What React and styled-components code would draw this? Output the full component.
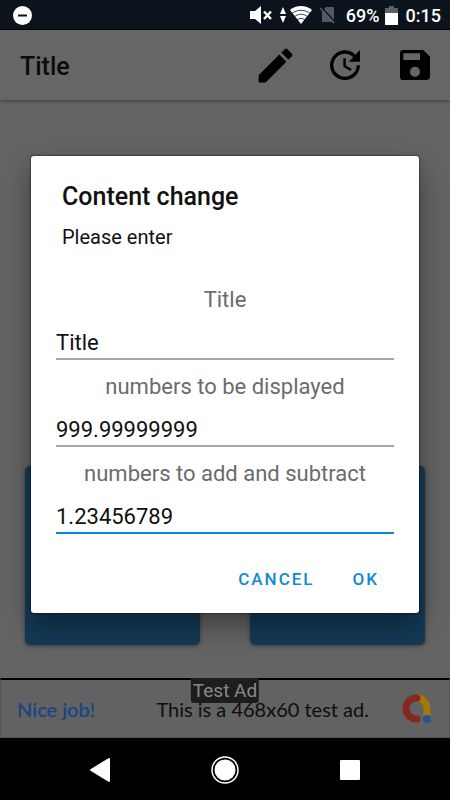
import React, { useState } from 'react';
import styled, { createGlobalStyle } from 'styled-components';
import { MdEdit, MdUpdate, MdSave } from 'react-icons/md';

const GlobalStyle = createGlobalStyle`
  * {
    box-sizing: border-box;
  }

  body {
    margin: 0;
    background: #000;
    font-family: Roboto, "Noto Sans", sans-serif;
  }

  button {
    border: 0;
    padding: 0;
    background: none;
    font-family: inherit;
    cursor: pointer;
  }
`;

const Screen = styled.div`
  display: flex;
  flex-direction: column;
  min-height: 100vh;
`;

const StatusBar = styled.div`
  display: flex;
  align-items: center;
  justify-content: space-between;
  height: 30px;
  padding: 1px 9px 0 13px;
  background: #0b131c;
  border-bottom: 1px solid #000;
  color: #fff;
  font-size: 18px;
  font-weight: 500;

  svg {
    display: block;
  }
`;

const StatusGroup = styled.div`
  display: flex;
  align-items: center;
  gap: ${props => props.$gap || 0}px;
`;

const AppArea = styled.div`
  position: relative;
  flex: 1;
  display: flex;
  flex-direction: column;
  background: #646464;
`;

const AppBar = styled.header`
  display: flex;
  align-items: center;
  justify-content: space-between;
  height: 70px;
  padding-left: 20px;
  background: #666;
  box-shadow: 0 1px 4px rgba(0, 0, 0, 0.4);
`;

const AppTitle = styled.h1`
  margin: 0;
  padding-top: 2px;
  font-size: 25px;
  font-weight: 500;
  color: #0a0c0a;
`;

const Actions = styled.div`
  display: flex;
`;

const ActionButton = styled.button`
  display: flex;
  align-items: center;
  justify-content: center;
  width: 70px;
  height: 70px;
  color: #000;
  font-size: ${props => props.$size || 40}px;
`;

const Counter = styled.main`
  flex: 1;
  display: flex;
  align-items: flex-end;
  gap: 50px;
  padding: 0 25px 33px;
`;

const CounterButton = styled.button`
  flex: 1;
  height: 179px;
  border-radius: 5px;
  background: #143a56;
  box-shadow: 0 1px 4px rgba(0, 0, 0, 0.4);
`;

const AdBanner = styled.a`
  position: relative;
  display: flex;
  align-items: center;
  justify-content: space-between;
  height: 60px;
  padding: 0 17px 0 16px;
  border: 1px solid #54555c;
  border-top: 2px solid #000;
  background: #626262;
  font-family: Lato, Roboto, sans-serif;
  font-size: 20px;
  text-decoration: none;
`;

const AdLead = styled.span`
  color: #1a4484;
  font-weight: 600;
`;

const AdText = styled.span`
  margin-left: 28px;
  color: #0d0d0d;
`;

const AdBadge = styled.span`
  position: absolute;
  top: -2px;
  left: 50%;
  transform: translateX(-50%);
  padding: 0 2px;
  border-radius: 0 0 3px 3px;
  background: #1d1d1d;
  color: #898989;
  font-family: Roboto, sans-serif;
  font-size: 19px;
  line-height: 25px;
  white-space: nowrap;
`;

const Overlay = styled.div`
  position: absolute;
  inset: 0;
  display: flex;
  align-items: center;
  justify-content: center;
  padding: 0 31px;
`;

const Dialog = styled.form`
  width: 100%;
  max-width: 560px;
  padding: 24px 25px 10px;
  border-radius: 3px;
  background: #fff;
  box-shadow: 0 0 2px #000, 0 12px 28px rgba(0, 0, 0, 0.4);
`;

const DialogTitle = styled.h2`
  margin: 0;
  padding: 0 6px;
  font-size: 25px;
  font-weight: 500;
  line-height: 34px;
  color: #111;
`;

const DialogMessage = styled.p`
  margin: 8px 0 34px;
  padding: 0 6px;
  font-size: 20px;
  line-height: 30px;
  color: #111;
`;

const Field = styled.div`
  display: flex;
  flex-direction: column;
  height: 87px;
`;

const FieldLabel = styled.label`
  font-size: 22px;
  line-height: 27px;
  text-align: center;
  color: #6b6b6b;
`;

const FieldInput = styled.input`
  width: 100%;
  height: 47px;
  margin: 0;
  padding: 14px 0 0;
  border: 0;
  border-bottom: 2px solid ${props => (props.$active ? '#0d86d8' : '#a6a6a6')};
  border-radius: 0;
  outline: 0;
  background: none;
  font-family: inherit;
  font-size: 22px;
  color: #111;
`;

const DialogActions = styled.div`
  display: flex;
  justify-content: flex-end;
  gap: 8px;
  margin-top: 8px;
`;

const TextButton = styled.button`
  height: 48px;
  padding: 0 15px;
  font-size: 17px;
  font-weight: 500;
  letter-spacing: 2px;
  color: #1089d8;
`;

const NavBar = styled.nav`
  display: flex;
  justify-content: center;
  height: 62px;
  padding-top: 2px;
  background: #000;
`;

const NavButton = styled.button`
  display: flex;
  align-items: center;
  justify-content: center;
  width: 125px;
`;

const DoNotDisturbIcon = () => (
  <svg width="19" height="19" viewBox="0 0 19 19">
    <circle cx="9.5" cy="9.5" r="9.5" fill="#fff" />
    <path d="M5 8.5h9v2H5z" fill="#0b131c" />
  </svg>
);

const MuteIcon = () => (
  <svg width="22" height="18" viewBox="0 0 22 18" fill="#fff">
    <path d="M0 5h5l6-5v18l-6-5H0z" />
    <path d="M14 5.500l7 7.500M21 5.500l-7 7.500" stroke="#fff" strokeWidth="2.400" />
  </svg>
);

const DataIcon = () => (
  <svg width="6" height="16" viewBox="0 0 6 16" fill="#fff">
    <path d="M3 0l3 7H0zM3 16l3-7H0z" />
  </svg>
);

const WifiIcon = () => (
  <svg width="22" height="18" viewBox="0 0 22 18">
    <path d="M0 4C6-1.3 16-1.3 22 4L11 18z" fill="#fff" />
    <path
      d="M2 7.5c5-4.3 13-4.3 18 0M4.5 10.7c4-3.2 9-3.2 13 0M7 14c2.5-2 5.5-2 8 0"
      fill="none"
      stroke="#0b131c"
      strokeWidth="0.8"
    />
  </svg>
);

const NoSimIcon = () => (
  <svg width="16" height="18" viewBox="0 0 16 18">
    <path d="M2 5l4-4h8v15H2z" fill="#525960" />
    <path d="M1 1l14 15" stroke="#0b131c" strokeWidth="1.600" />
    <path d="M0 2l14 15" stroke="#59616a" strokeWidth="1.300" />
  </svg>
);

const BatteryIcon = () => (
  <svg width="13" height="19" viewBox="0 0 13 19">
    <path d="M0 2h4V0h5v2h4v5H0z" fill="#5b6167" />
    <path d="M0 7h13v12H0z" fill="#fff" />
  </svg>
);

const AdLogo = () => (
  <svg width="30" height="30" viewBox="0 0 30 30" fill="none" strokeWidth="7">
    <path d="M15 4c6 0 10 5 10 11v10" stroke="#a37a06" />
    <path d="M15 4C8 4 4 9 4 15s5 10 11 10" stroke="#842920" strokeLinecap="round" />
    <circle cx="25" cy="25" r="4" fill="#24539b" />
  </svg>
);

const fields = [
  { id: 'title', label: 'Title' },
  { id: 'display', label: 'numbers to be displayed' },
  { id: 'step', label: 'numbers to add and subtract', active: true },
];

const App = () => {
  const [values, setValues] = useState({
    title: 'Title',
    display: '999.99999999',
    step: '1.23456789',
  });

  return (
    <Screen>
      <GlobalStyle />
      <StatusBar>
        <DoNotDisturbIcon />
        <StatusGroup $gap={8}>
          <StatusGroup $gap={10}>
            <StatusGroup $gap={8}>
              <StatusGroup $gap={4}>
                <StatusGroup $gap={8}>
                  <MuteIcon />
                  <DataIcon />
                </StatusGroup>
                <WifiIcon />
              </StatusGroup>
              <NoSimIcon />
            </StatusGroup>
            <StatusGroup $gap={5}>
              <span>69%</span>
              <BatteryIcon />
            </StatusGroup>
          </StatusGroup>
          <span>0:15</span>
        </StatusGroup>
      </StatusBar>

      <AppArea>
        <AppBar>
          <AppTitle>Title</AppTitle>
          <Actions>
            <ActionButton type="button" aria-label="Edit" $size={45}><MdEdit /></ActionButton>
            <ActionButton type="button" aria-label="History"><MdUpdate /></ActionButton>
            <ActionButton type="button" aria-label="Save"><MdSave /></ActionButton>
          </Actions>
        </AppBar>
        <Counter>
          <CounterButton type="button" aria-label="Subtract" />
          <CounterButton type="button" aria-label="Add" />
        </Counter>
        <AdBanner href="#ad">
          <AdLead>Nice job!</AdLead>
          <AdText>This is a 468x60 test ad.</AdText>
          <AdLogo />
          <AdBadge>Test Ad</AdBadge>
        </AdBanner>

        <Overlay>
          <Dialog role="dialog" aria-labelledby="dialog-title" onSubmit={e => e.preventDefault()}>
            <DialogTitle id="dialog-title">Content change</DialogTitle>
            <DialogMessage>Please enter</DialogMessage>
            {fields.map(({ id, label, active }) => (
              <Field key={id}>
                <FieldLabel htmlFor={id}>{label}</FieldLabel>
                <FieldInput
                  id={id}
                  value={values[id]}
                  $active={active}
                  onChange={e => setValues({ ...values, [id]: e.target.value })}
                />
              </Field>
            ))}
            <DialogActions>
              <TextButton type="button">CANCEL</TextButton>
              <TextButton type="submit">OK</TextButton>
            </DialogActions>
          </Dialog>
        </Overlay>
      </AppArea>

      <NavBar>
        <NavButton type="button" aria-label="Back">
          <svg width="20" height="24" viewBox="0 0 20 24">
            <path d="M19 1v22L1 12z" fill="#fff" stroke="#fff" strokeWidth="2" strokeLinejoin="round" />
          </svg>
        </NavButton>
        <NavButton type="button" aria-label="Home">
          <svg width="28" height="28" viewBox="0 0 28 28">
            <circle cx="14" cy="14" r="13" fill="none" stroke="#fff" strokeWidth="1.5" />
            <circle cx="14" cy="14" r="10.5" fill="#fff" />
          </svg>
        </NavButton>
        <NavButton type="button" aria-label="Recent apps">
          <svg width="20" height="20" viewBox="0 0 20 20">
            <rect width="20" height="20" rx="1" fill="#fff" />
          </svg>
        </NavButton>
      </NavBar>
    </Screen>
  );
};

export default App;
